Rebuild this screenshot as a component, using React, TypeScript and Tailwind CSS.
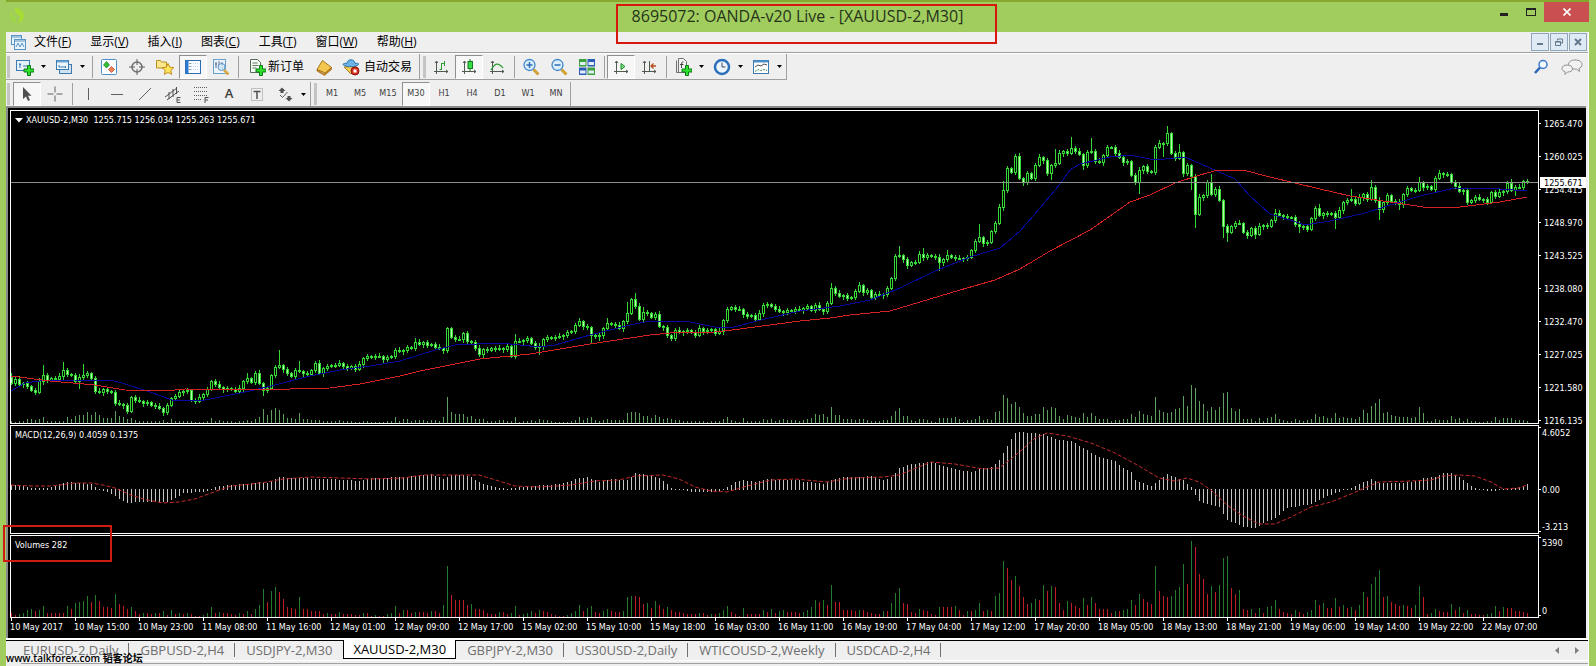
import type { ReactNode } from 'react';
import clsx from 'clsx';

type Point = [number, number];

const STEP = 4;
const FIRST_X = 11;
const VOLUME_BASE = 617;
const MACD_ZERO = 490;

const barX = (i: number) => FIRST_X + i * STEP;

// close of every bar, in chart window pixels
const CLOSES = [
  383, 379, 384, 383, 386, 390, 392, 381, 375, 380, 378, 379, 376, 370, 374, 375, 381, 377, 375, 373,
  378, 391, 392, 389, 391, 392, 403, 404, 405, 411, 397, 400, 401, 403, 402, 405, 406, 408, 412, 405,
  398, 396, 392, 391, 390, 400, 401, 397, 394, 389, 381, 384, 387, 389, 388, 389, 391, 388, 381, 378,
  382, 373, 383, 390, 388, 375, 367, 365, 369, 373, 376, 370, 371, 373, 374, 370, 363, 373, 368, 366,
  365, 365, 363, 366, 368, 366, 369, 364, 358, 356, 357, 356, 356, 359, 357, 356, 350, 351, 350, 347,
  348, 342, 344, 342, 345, 344, 347, 348, 350, 328, 337, 339, 339, 333, 341, 342, 348, 354, 349, 350,
  348, 349, 348, 349, 346, 356, 341, 341, 340, 338, 343, 347, 346, 339, 337, 338, 337, 336, 335, 332,
  331, 325, 321, 326, 327, 335, 336, 335, 328, 323, 324, 325, 328, 321, 313, 299, 306, 319, 312, 313,
  317, 314, 326, 327, 335, 338, 330, 332, 331, 330, 332, 335, 328, 331, 330, 329, 333, 331, 320, 309,
  307, 309, 309, 314, 316, 315, 319, 313, 305, 304, 306, 309, 311, 312, 310, 311, 309, 310, 308, 306,
  310, 305, 309, 311, 303, 288, 293, 296, 295, 298, 297, 291, 285, 292, 290, 297, 294, 295, 294, 288,
  278, 256, 255, 259, 265, 262, 262, 254, 257, 255, 256, 257, 262, 259, 255, 257, 258, 258, 258, 257,
  250, 241, 237, 243, 242, 231, 223, 207, 190, 168, 172, 156, 178, 182, 173, 178, 165, 157, 160, 173,
  165, 163, 153, 151, 153, 148, 151, 154, 165, 152, 151, 161, 162, 155, 147, 147, 153, 157, 162, 161,
  175, 182, 170, 166, 171, 172, 147, 143, 143, 133, 153, 158, 152, 173, 165, 176, 214, 197, 195, 182,
  194, 189, 200, 226, 232, 226, 223, 223, 232, 235, 228, 234, 226, 225, 226, 220, 213, 215, 216, 217,
  217, 224, 226, 226, 229, 218, 208, 215, 213, 214, 213, 217, 210, 202, 200, 199, 203, 197, 194, 199,
  187, 200, 209, 202, 195, 201, 202, 204, 194, 188, 190, 190, 182, 187, 186, 189, 178, 173, 174, 174,
  182, 186, 191, 190, 202, 200, 197, 199, 199, 202, 192, 196, 192, 191, 183, 190, 187, 187, 181, 181,
];

// bars whose wick reaches far out of the body
const HIGHS: Record<number, number> = {
  0: 373, 8: 365, 13: 362, 18: 364, 59: 373, 67: 350, 72: 361, 101: 338, 109: 327, 126: 334, 149: 318,
  154: 302, 156: 293, 158: 307, 188: 303, 205: 283, 222: 246, 228: 248, 234: 250, 242: 224, 248: 181,
  251: 154, 261: 149, 265: 137, 270: 138, 289: 126, 292: 144, 300: 174, 316: 209, 327: 204, 335: 189,
  340: 180, 352: 177, 374: 181, 375: 179,
};
const LOWS: Record<number, number> = {
  17: 389, 38: 416, 63: 396, 108: 354, 117: 357, 132: 355, 145: 344, 147: 341, 165: 341, 209: 301,
  224: 269, 232: 271, 253: 186, 260: 180, 268: 170, 282: 194, 288: 157, 295: 190, 296: 228, 303: 238,
  304: 242, 308: 234, 309: 239, 311: 239, 322: 233, 331: 229, 342: 220, 347: 210, 376: 196,
};

const VOLUMES = [
  4, 2, 3, 4, 7, 8, 6, 7, 11, 4, 4, 4, 4, 4, 11, 8, 14, 15, 16, 21,
  15, 22, 16, 10, 10, 9, 23, 13, 11, 8, 10, 6, 3, 4, 4, 3, 4, 4, 6, 2,
  7, 3, 4, 3, 4, 3, 1, 1, 2, 4, 10, 4, 5, 4, 4, 3, 2, 4, 3, 6,
  3, 8, 12, 28, 15, 26, 30, 25, 18, 10, 9, 8, 20, 8, 8, 6, 6, 6, 3, 4,
  3, 3, 5, 3, 3, 3, 2, 2, 4, 4, 1, 2, 1, 1, 3, 4, 11, 4, 7, 7,
  4, 5, 5, 5, 4, 6, 6, 4, 12, 51, 22, 17, 17, 17, 12, 13, 8, 8, 7, 4,
  3, 3, 5, 5, 3, 4, 11, 2, 3, 4, 6, 4, 7, 6, 5, 3, 2, 1, 1, 2,
  4, 6, 12, 6, 9, 11, 5, 4, 6, 8, 6, 5, 5, 6, 20, 21, 21, 20, 13, 14,
  9, 16, 12, 8, 10, 7, 5, 5, 4, 3, 3, 3, 4, 4, 2, 3, 3, 4, 7, 11,
  5, 3, 1, 9, 3, 3, 3, 3, 7, 5, 8, 4, 6, 7, 5, 5, 5, 4, 5, 7,
  10, 17, 15, 17, 12, 32, 15, 15, 7, 7, 7, 6, 7, 7, 5, 4, 3, 3, 6, 6,
  14, 24, 29, 14, 13, 5, 4, 8, 7, 6, 3, 2, 10, 10, 10, 10, 11, 7, 2, 6,
  6, 7, 14, 6, 7, 6, 21, 24, 56, 49, 37, 41, 31, 20, 13, 14, 18, 17, 32, 26,
  31, 30, 14, 7, 16, 14, 11, 9, 19, 12, 20, 14, 8, 8, 8, 4, 6, 6, 7, 8,
  17, 12, 23, 18, 15, 13, 51, 26, 21, 20, 21, 27, 30, 53, 33, 76, 70, 43, 38, 23,
  31, 25, 32, 59, 61, 29, 23, 27, 8, 7, 8, 4, 9, 4, 10, 11, 17, 8, 5, 4,
  3, 7, 5, 3, 5, 7, 17, 12, 14, 9, 9, 19, 10, 12, 9, 10, 7, 12, 25, 20,
  33, 40, 47, 20, 21, 15, 13, 11, 12, 11, 9, 12, 31, 20, 3, 4, 8, 6, 5, 5,
  13, 7, 10, 4, 7, 3, 3, 2, 2, 3, 4, 11, 6, 10, 9, 9, 6, 6, 5, 4,
];

// [bar, y] knots, straight lines in between
const MACD: Point[] = [
  [0, 485], [3, 486], [5, 488], [8, 488], [10, 487], [12, 484], [14, 482], [18, 483], [20, 484], [21, 487],
  [22, 489], [24, 492], [26, 496], [28, 501], [29, 503], [32, 502], [39, 502], [41, 498], [43, 493], [47, 492],
  [49, 491], [51, 487], [54, 485], [58, 484], [62, 482], [64, 483], [67, 477], [70, 478], [80, 479], [87, 481],
  [90, 478], [98, 477], [101, 476], [105, 474], [108, 479], [110, 475], [113, 475], [115, 477], [117, 482],
  [119, 485], [121, 487], [124, 489], [127, 487], [129, 486], [133, 485], [137, 484], [139, 482], [142, 478],
  [144, 477], [147, 482], [150, 479], [154, 480], [156, 473], [158, 474], [160, 475], [162, 478], [164, 484],
  [165, 488], [167, 489], [169, 491], [171, 492], [177, 492], [179, 487], [181, 482], [183, 480], [186, 482],
  [189, 479], [192, 480], [197, 480], [198, 482], [200, 482], [203, 484], [205, 480], [208, 477], [212, 477],
  [215, 476], [218, 480], [220, 477], [222, 468], [224, 465], [227, 463], [230, 462], [233, 466], [237, 470],
  [240, 472], [243, 468], [245, 467], [247, 460], [249, 446], [250, 439], [251, 433], [252, 432], [255, 433],
  [258, 434], [261, 439], [265, 441], [268, 448], [272, 457], [276, 461], [278, 468], [280, 472], [281, 480],
  [283, 483], [285, 486], [287, 480], [289, 474], [291, 477], [293, 480], [294, 484], [295, 487], [296, 495],
  [297, 501], [298, 503], [300, 505], [302, 507], [304, 520], [306, 523], [308, 527], [311, 528], [313, 523],
  [316, 518], [319, 508], [322, 506], [325, 504], [328, 498], [331, 493], [334, 489], [336, 486], [338, 482],
  [340, 479], [342, 483], [348, 483], [351, 481], [353, 478], [356, 477], [358, 473], [360, 473], [362, 477],
  [364, 483], [366, 488], [369, 491], [371, 491], [373, 489], [375, 488], [377, 487], [379, 484],
];

const SIGNAL: Point[] = [
  [0, 485], [5, 486], [10, 486], [16, 483], [20, 483], [23, 485], [26, 488], [30, 495], [34, 500], [38, 503],
  [42, 502], [46, 499], [50, 493], [55, 486], [60, 484], [64, 482], [68, 479], [75, 477], [90, 479], [98, 478],
  [103, 475], [117, 475], [122, 481], [126, 486], [132, 487], [140, 485], [146, 481], [152, 480], [156, 476],
  [163, 475], [167, 479], [171, 487], [175, 491], [179, 492], [184, 486], [190, 480], [196, 479], [204, 482],
  [210, 478], [218, 477], [222, 475], [230, 462], [236, 464], [243, 469], [247, 468], [250, 459], [253, 449],
  [256, 438], [259, 433], [264, 436], [270, 443], [276, 453], [282, 466], [287, 478], [291, 481], [294, 478],
  [297, 482], [300, 490], [304, 505], [308, 516], [312, 524], [316, 524], [320, 517], [325, 507], [330, 502],
  [335, 494], [339, 487], [342, 482], [350, 481], [355, 480], [358, 476], [362, 475], [366, 476], [370, 482],
  [373, 489], [377, 488], [379, 485],
];

// [x, y]
const SLOW_MA: Point[] = [
  [11, 376], [50, 381], [95, 385], [125, 390], [165, 391], [185, 389], [250, 390], [330, 388], [360, 384],
  [400, 376], [420, 371], [445, 366], [480, 359], [530, 354], [590, 344], [650, 335], [670, 333], [715, 332],
  [740, 329], [800, 321], [830, 318], [850, 315], [890, 311], [920, 302], [960, 290], [995, 280], [1020, 269],
  [1050, 251], [1090, 230], [1130, 202], [1150, 195], [1175, 183], [1200, 175], [1218, 170], [1243, 170],
  [1270, 177], [1320, 189], [1350, 196], [1390, 202], [1430, 208], [1460, 207], [1500, 202], [1527, 197],
];
const FAST_MA: Point[] = [
  [11, 391], [25, 383], [40, 381], [75, 380], [110, 380], [122, 383], [150, 392], [172, 400], [200, 401],
  [225, 396], [250, 391], [275, 385], [310, 376], [340, 370], [370, 366], [400, 361], [435, 350], [455, 345],
  [500, 343], [540, 347], [555, 345], [590, 335], [630, 325], [650, 321], [690, 322], [715, 327], [730, 328],
  [765, 319], [800, 311], [840, 306], [870, 300], [900, 288], [935, 271], [970, 257], [1000, 248], [1020, 231],
  [1040, 208], [1060, 184], [1070, 170], [1080, 164], [1110, 157], [1130, 155], [1155, 160], [1185, 157],
  [1210, 168], [1235, 179], [1250, 196], [1270, 214], [1290, 220], [1305, 225], [1330, 221], [1365, 213],
  [1400, 202], [1420, 196], [1455, 188], [1500, 189], [1527, 191],
];

const PRICES = [
  '1265.470', '1260.025', '1254.415', '1248.970', '1243.525',
  '1238.080', '1232.470', '1227.025', '1221.580', '1216.135',
];

const TIMES = [
  '10 May 2017', '10 May 15:00', '10 May 23:00', '11 May 08:00', '11 May 16:00', '12 May 01:00',
  '12 May 09:00', '12 May 17:00', '15 May 02:00', '15 May 10:00', '15 May 18:00', '16 May 03:00',
  '16 May 11:00', '16 May 19:00', '17 May 04:00', '17 May 12:00', '17 May 20:00', '18 May 05:00',
  '18 May 13:00', '18 May 21:00', '19 May 06:00', '19 May 14:00', '19 May 22:00', '22 May 07:00',
];

const MENUS = [
  ['文件', 'F'], ['显示', 'V'], ['插入', 'I'], ['图表', 'C'], ['工具', 'T'], ['窗口', 'W'], ['帮助', 'H'],
];

const TIMEFRAMES = ['M1', 'M5', 'M15', 'M30', 'H1', 'H4', 'D1', 'W1', 'MN'];

const TABS = [
  'EURUSD-2,Daily', 'GBPUSD-2,H4', 'USDJPY-2,M30', 'XAUUSD-2,M30',
  'GBPJPY-2,M30', 'US30USD-2,Daily', 'WTICOUSD-2,Weekly', 'USDCAD-2,H4',
];
const ACTIVE_TAB = 3;

function interpolate(knots: Point[], i: number) {
  const next = knots.findIndex(([bar]) => bar >= i);
  if (next <= 0) return knots[0][1];
  const [x0, y0] = knots[next - 1];
  const [x1, y1] = knots[next];
  return Math.round(y0 + ((y1 - y0) * (i - x0)) / (x1 - x0));
}

const toPoints = (points: Point[]) => points.map(([x, y]) => `${x},${y}`).join(' ');

/* ---------- chart ---------- */

function Candles() {
  return (
    <g shapeRendering="crispEdges" stroke="#35d835">
      {CLOSES.map((close, i) => {
        const open = i === 0 ? 377 : CLOSES[i - 1];
        const top = Math.min(open, close);
        const bottom = Math.max(open, close);
        const x = barX(i);
        const high = HIGHS[i] ?? top - 1 - ((i * 37) % 5 >> 1);
        const low = LOWS[i] ?? bottom + 2 + ((i * 53) % 5 >> 1);
        return (
          <g key={i}>
            <line x1={x + 0.5} x2={x + 0.5} y1={high} y2={low} />
            <rect
              x={x - 0.5}
              y={top + 0.5}
              width={2}
              height={Math.max(bottom - top, 1)}
              fill={close > open ? '#b8f8b0' : '#000'}
            />
          </g>
        );
      })}
    </g>
  );
}

function PricePlot() {
  return (
    <svg viewBox="11 111 1527 312" preserveAspectRatio="xMaxYMid slice" className="block h-full w-full">
      <g shapeRendering="crispEdges" fill="#5f9f5f">
        {VOLUMES.map((v, i) => {
          const h = Math.max(1, Math.round(v / 2));
          return <rect key={i} x={barX(i)} y={423 - h} width={1} height={h} />;
        })}
      </g>
      <Candles />
      <g fill="none" shapeRendering="crispEdges">
        <polyline points={toPoints(FAST_MA)} stroke="#0808a0" />
        <polyline points={toPoints(SLOW_MA)} stroke="#d42222" />
      </g>
      <rect x={11} y={182} width={1527} height={1} fill="#8c8f8c" />
    </svg>
  );
}

function MacdPlot() {
  return (
    <svg viewBox="11 426 1527 107" preserveAspectRatio="xMaxYMid slice" className="block h-full w-full">
      <g shapeRendering="crispEdges" fill="#c4c4c4">
        {CLOSES.map((_, i) => {
          const y = interpolate(MACD, i);
          const up = y < MACD_ZERO;
          return (
            <rect
              key={i}
              x={barX(i)}
              y={up ? y : MACD_ZERO - 1}
              width={1}
              height={up ? MACD_ZERO - y : y - MACD_ZERO + 1}
            />
          );
        })}
      </g>
      <polyline
        points={toPoints(SIGNAL.map(([i, y]) => [barX(i), y]))}
        fill="none"
        stroke="#c42a2a"
        strokeDasharray="4 2"
      />
    </svg>
  );
}

function VolumePlot() {
  return (
    <svg viewBox="11 536 1527 81" preserveAspectRatio="xMaxYMid slice" className="block h-full w-full">
      <g shapeRendering="crispEdges">
        {VOLUMES.map((v, i) => (
          <rect
            key={i}
            x={barX(i)}
            y={VOLUME_BASE - v}
            width={1}
            height={v}
            fill={i > 0 && v > VOLUMES[i - 1] ? '#237a2c' : '#c01c28'}
          />
        ))}
      </g>
    </svg>
  );
}

function Pane({ height, title, plot, scale }: { height: string; title: ReactNode; plot: ReactNode; scale: ReactNode }) {
  return (
    <section className={clsx('flex', height)}>
      <div className="relative min-w-0 flex-1 border border-white">
        {plot}
        <div className="absolute top-px left-1 flex items-center text-[9px] leading-4 whitespace-pre">{title}</div>
      </div>
      <div className="w-[47px] shrink-0">{scale}</div>
    </section>
  );
}

function PriceScale() {
  return (
    <svg viewBox="1539 110 47 314" className="block h-full w-full overflow-visible text-[9px]">
      {PRICES.map((price, i) => (
        <g key={price} fill="#fff">
          <rect x={1539} y={123 + i * 33} width={2} height={1} />
          <text x={1544} y={127 + i * 33}>{price}</text>
        </g>
      ))}
      <rect x={1540} y={177} width={46} height={11} fill="#fff" />
      <text x={1544} y={186} fill="#000">1255.671</text>
    </svg>
  );
}

function Chart() {
  return (
    <main className="border-t-2 border-l-2 border-[#8a8a8a] bg-black pt-[2px] pb-1 pl-[2px] font-['DejaVu_Sans_Condensed','Noto_Sans',sans-serif] text-white">
      <div className="flex flex-col gap-px">
        <Pane
          height="h-[314px]"
          title={
            <>
              <svg width="8" height="5" viewBox="0 0 8 5" fill="#fff"><path d="M0 0h8L4 4.500z" /></svg>
              <span className="pl-[3px]">XAUUSD-2,M30  1255.715 1256.034 1255.263 1255.671</span>
            </>
          }
          plot={<PricePlot />}
          scale={<PriceScale />}
        />
        <Pane
          height="h-[109px]"
          title="MACD(12,26,9) 0.4059 0.1375"
          plot={<MacdPlot />}
          scale={
            <svg viewBox="1539 425 47 109" className="block h-full w-full text-[9px]" fill="#fff">
              <rect x={1539} y={427} width={2} height={1} />
              <rect x={1539} y={489} width={2} height={1} />
              <rect x={1539} y={531} width={2} height={1} />
              <text x={1542} y={436}>4.6052</text>
              <text x={1542} y={493}>0.00</text>
              <text x={1542} y={530}>-3.213</text>
            </svg>
          }
        />
        <Pane
          height="h-[83px]"
          title="Volumes 282"
          plot={<VolumePlot />}
          scale={
            <svg viewBox="1539 535 47 83" className="block h-full w-full text-[9px]" fill="#fff">
              <rect x={1539} y={537} width={2} height={1} />
              <rect x={1539} y={615} width={2} height={1} />
              <text x={1542} y={546}>5390</text>
              <text x={1542} y={614}>0</text>
            </svg>
          }
        />
      </div>
      <ol className="flex overflow-hidden">
        {TIMES.map((time) => (
          <li
            key={time}
            className="w-16 shrink-0 text-[9px] leading-[13px] whitespace-nowrap before:ml-px before:block before:h-[3px] before:w-px before:bg-white"
          >
            {time}
          </li>
        ))}
      </ol>
    </main>
  );
}

/* ---------- icons ---------- */

function Icon({ children, size = 18 }: { children: ReactNode; size?: number }) {
  return (
    <svg width={size} height={size} viewBox="0 0 18 18" fill="none" aria-hidden="true">
      {children}
    </svg>
  );
}

const plus = <path d="M11.500 7.500h3v3.500h3.500v3h-3.500v3.500h-3v-3.500H8v-3h3.500z" fill="#2fe02f" stroke="#0a7a14" />;

const axes = (
  <path d="M4.500 3v13M2 13.500h14M3 5l1.500-2L6 5M14 12l2 1.500-2 1.500" stroke="#505a50" />
);

const NewChartIcon = (
  <Icon>
    <rect x=".5" y="2.500" width="13" height="10" fill="#e4f0fb" stroke="#3c7ab0" />
    <path d="M4 5v5M3 6.500h2M7 8h4" stroke="#3c7ab0" />
    {plus}
  </Icon>
);
const ProfilesIcon = (
  <Icon>
    <rect x="4.500" y="6.500" width="12" height="9" fill="#cfe2f4" stroke="#3c7ab0" />
    <rect x="1.500" y="2.500" width="12" height="9" fill="#eef6fd" stroke="#3c7ab0" />
    <path d="M2 3.500h11" stroke="#6aa4d4" strokeWidth="2" />
    <path d="M4 7v2h7M10 8l1 1-1 1" stroke="#3c7ab0" />
  </Icon>
);
const MarketWatchIcon = (
  <Icon>
    <rect x="1.500" y="1.500" width="15" height="15" rx="1" fill="#fff" stroke="#4a90c8" />
    <path d="M6.500 3.500L9.500 7 6.500 10 3.500 7z" fill="#34c034" stroke="#0f7a1c" strokeWidth=".7" />
    <path d="M11.500 14.500l3-3-3-3-3 3z" fill="#f08058" stroke="#b03818" strokeWidth=".7" />
  </Icon>
);
const DataWindowIcon = (
  <Icon>
    <circle cx="9" cy="9" r="5" stroke="#707070" strokeWidth="1.500" />
    <path d="M9 1v6M9 11v6M1 9h6M11 9h6" stroke="#606060" />
  </Icon>
);
const NavigatorIcon = (
  <Icon>
    <path d="M.5 2.500h4l1 1.500h5v6H.5z" fill="#fbe68c" stroke="#b89020" />
    <path d="M12 5.500l1.800 3.700 4 .5-3 2.700.8 4-3.600-2-3.600 2 .8-4-3-2.700 4-.5z" fill="#ffe45c" stroke="#c09018" />
  </Icon>
);
const TerminalIcon = (
  <Icon>
    <rect x="1.500" y="2.500" width="15" height="13" fill="#f8fbff" stroke="#2c6cb0" />
    <path d="M3 3v12" stroke="#2c78d0" strokeWidth="3" />
    <path d="M7 5.500h8M7 8.500h8M7 11.500h8" stroke="#c4d6ea" strokeDasharray="1 1" />
    <path d="M5.500 5.500h1M5.500 8.500h1M5.500 11.500h1" stroke="#404040" />
  </Icon>
);
const TesterIcon = (
  <Icon>
    <rect x="1.500" y="1.500" width="12" height="14" fill="#eef4fb" stroke="#6aa0cc" />
    <path d="M4 4v6M7 3v5M10 4v7M3 6h2M9 6h2" stroke="#507090" />
    <circle cx="9.500" cy="9" r="3.500" fill="#cfe6fa" fillOpacity=".8" stroke="#5a96c8" />
    <path d="M12 12l4.500 4.500" stroke="#d8a840" strokeWidth="2.500" />
  </Icon>
);
const NewOrderIcon = (
  <Icon>
    <path d="M2.500 1.500h7l3 3v10h-10z" fill="#f6faf6" stroke="#5a6a5a" />
    <path d="M4.500 5h5M4.500 7.500h6M4.500 10h4" stroke="#607860" />
    {plus}
  </Icon>
);
const MetaEditorIcon = (
  <Icon>
    <path d="M2 11.500L7.500 2.500l9 7-6 5.500z" fill="#f4c850" stroke="#a87414" />
    <path d="M2 11.500l7 4.500 7.500-6.500v2L9.500 17.500 2 13z" fill="#c88c20" stroke="#946010" strokeWidth=".6" />
  </Icon>
);
const AutoTradingIcon = (
  <Icon>
    <path d="M2 9l7 7 5-4V8z" fill="#f6cc54" stroke="#a87c18" />
    <path d="M5 5.500c0-5 8-5 8 0 3-.5 4 0 3.500 1C14 9.500 4 9.500 1 6.500c0-1 2-1.500 4-1z" fill="#6cb4e8" stroke="#2c78b0" />
    <circle cx="13" cy="13" r="4" fill="#d83020" stroke="#901408" />
    <rect x="11.500" y="11.500" width="3" height="3" fill="#fff" />
  </Icon>
);
const BarChartIcon = (
  <Icon>
    {axes}
    <path d="M9.500 5v7M7.500 11.500h2M9.500 5.500h3M12.500 3v5" stroke="#2c9c34" />
  </Icon>
);
const CandleChartIcon = (
  <Icon>
    {axes}
    <path d="M10 1v12" stroke="#147a20" />
    <rect x="8" y="3.500" width="4.500" height="7" fill="#38dc44" stroke="#147a20" />
  </Icon>
);
const LineChartIcon = (
  <Icon>
    {axes}
    <path d="M3 12c4-7 7-8 12-2" stroke="#2c9c34" strokeWidth="1.200" />
  </Icon>
);
const magnifier = (
  <>
    <path d="M11.500 11.500l5 5" stroke="#d0a030" strokeWidth="3" />
    <circle cx="7.500" cy="7" r="5.500" fill="#dceefb" stroke="#4088cc" strokeWidth="1.300" />
  </>
);
const ZoomInIcon = (
  <Icon>
    {magnifier}
    <path d="M4.500 7h6M7.500 4v6" stroke="#2c6cb8" strokeWidth="1.500" />
  </Icon>
);
const ZoomOutIcon = (
  <Icon>
    {magnifier}
    <path d="M4.500 7h6" stroke="#2c6cb8" strokeWidth="1.500" />
  </Icon>
);
const TileIcon = (
  <Icon>
    <path d="M1 1h7.500v7.500H1zM9.500 9.500H17V17H9.500z" fill="#3ca03c" />
    <path d="M9.500 1H17v7.500H9.500zM1 9.500h7.500V17H1z" fill="#2c5cb8" />
    <path d="M2 4h5.500v3H2zM10.500 4H16v3h-5.500zM2 12.500h5.500v3H2zM10.500 12.500H16v3h-5.500z" fill="#e4eefa" />
  </Icon>
);
const AutoScrollIcon = (
  <Icon>
    {axes}
    <path d="M9 5.500v6l4-3z" fill="#7ce07c" stroke="#1c8c2c" />
  </Icon>
);
const ShiftIcon = (
  <Icon>
    {axes}
    <path d="M9.500 3v10" stroke="#505a50" />
    <path d="M11 8h5M13.500 5.500L11 8l2.500 2.500" stroke="#b84a1c" strokeWidth="1.300" />
  </Icon>
);
const IndicatorsIcon = (
  <Icon>
    <path d="M4.500.5h5l3 3v11h-8z" fill="#f4f4f4" stroke="#707070" />
    <path d="M2.500 2.500v12h6" stroke="#707070" />
    <path d="M9.500 4c-2-1-2 2-2 6M6 6.500h3.500" stroke="#404040" />
    {plus}
  </Icon>
);
const PeriodsIcon = (
  <Icon>
    <circle cx="9" cy="9" r="7" fill="#eef6fd" stroke="#2c70bc" strokeWidth="2.500" />
    <path d="M9 4.500V9h3.500" stroke="#404860" />
  </Icon>
);
const TemplatesIcon = (
  <Icon>
    <rect x="1.500" y="2.500" width="15" height="13" fill="#fff" stroke="#3c7ab0" />
    <path d="M2 3.500h14" stroke="#4c90cc" strokeWidth="2" />
    <path d="M3 9l3-2 3 1 3-2 3 1" stroke="#505050" />
    <path d="M3 13.500l3-2 3 1 3-1 3 1" stroke="#3c9050" strokeDasharray="2 1" />
  </Icon>
);

const CursorIcon = (
  <Icon>
    <path d="M5 2v12l3-2.500 2 4.500 2-1-2-4.200h3.500z" fill="#505050" />
  </Icon>
);
const CrosshairIcon = (
  <Icon>
    <path d="M9 1.500v6M9 10.500v6M1.500 9h6M10.500 9h6" stroke="#606060" />
  </Icon>
);
const ChannelIcon = (
  <Icon>
    <path d="M1 12l12-9M3 15l12-9M5 7v7M9 4v8M12.500 2v7" stroke="#505050" />
    <path d="M16.500 12.500H13v5h3.500M13 15h3" stroke="#505050" />
  </Icon>
);
const FiboIcon = (
  <Icon>
    <path d="M2 2.500h14M2 6.500h14M2 10.500h14M2 14.500h8" stroke="#606060" strokeDasharray="1 1" />
    <path d="M16.500 12.500H13V18M13 15h3" stroke="#505050" />
  </Icon>
);
const TextLabelIcon = (
  <Icon>
    <rect x="3.500" y="3.500" width="11" height="12" stroke="#909090" strokeDasharray="1 1" />
    <path d="M5.500 6.500h7M9 6.500v7.500" stroke="#505050" strokeWidth="1.500" />
  </Icon>
);
const ArrowsIcon = (
  <Icon>
    <path d="M6 2.500L9.500 6H7.500v2h-3V6h-2zM13 16.500l3.500-3.500h-2v-2h-3v2h-2z" fill="#505050" />
    <path d="M4 10l2.500 2.500L11.500 7" stroke="#606060" />
  </Icon>
);

/* ---------- toolbars ---------- */

function ToolButton({ label, pressed, children }: { label: string; pressed?: boolean; children: ReactNode }) {
  return (
    <button
      type="button"
      aria-label={label}
      aria-pressed={pressed}
      className={clsx(
        'flex h-6 w-7 shrink-0 items-center justify-center border text-[9px] text-[#404040]',
        pressed ? 'border-t-[#909090] border-r-white border-b-white border-l-[#909090] bg-[#f7f7f7]' : 'border-transparent',
      )}
    >
      {children}
    </button>
  );
}

function DropArrow({ label }: { label: string }) {
  return (
    <button type="button" aria-label={label} className="flex h-6 w-[11px] shrink-0 items-center justify-start pl-[2px]">
      <svg width="5" height="3" viewBox="0 0 5 3"><path d="M0 0h5L2.500 3z" fill="#000" /></svg>
    </button>
  );
}

const Grip = () => (
  <svg width="5" height="22" viewBox="0 0 5 22" className="shrink-0">
    <path d="M1 1h3M1 3h3M1 5h3M1 7h3M1 9h3M1 11h3M1 13h3M1 15h3M1 17h3M1 19h3M1 21h3" stroke="#9a9a9a" />
  </svg>
);

const Separator = () => (
  <div className="flex w-[6px] shrink-0 justify-center"><div className="h-[22px] w-px bg-[#a0a0a0]" /></div>
);

function StandardToolbar() {
  return (
    <div className="flex h-[27px] items-center justify-between border-t border-white pr-[5px]">
      <div className="flex h-full items-center border-r border-b border-[#a0a0a0]">
        <Grip />
        <ToolButton label="新图表">{NewChartIcon}</ToolButton>
        <DropArrow label="新图表列表" />
        <ToolButton label="配置文件">{ProfilesIcon}</ToolButton>
        <DropArrow label="配置文件列表" />
        <Separator />
        <ToolButton label="市场报价">{MarketWatchIcon}</ToolButton>
        <ToolButton label="数据窗口">{DataWindowIcon}</ToolButton>
        <ToolButton label="导航">{NavigatorIcon}</ToolButton>
        <ToolButton label="终端" pressed>{TerminalIcon}</ToolButton>
        <ToolButton label="策略测试">{TesterIcon}</ToolButton>
        <Separator />
        <button type="button" className="flex w-[69px] items-center gap-[2px] pl-[7px] text-[12px] leading-4 whitespace-nowrap">
          {NewOrderIcon}新订单
        </button>
        <ToolButton label="MetaEditor">{MetaEditorIcon}</ToolButton>
        <button type="button" className="flex w-[81px] items-center gap-[4px] pl-1 text-[12px] leading-4 whitespace-nowrap">
          {AutoTradingIcon}自动交易
        </button>
      </div>
      <div className="flex h-full flex-1 items-center">
        <div className="flex h-full items-center border-r border-b border-[#a0a0a0] pl-[2px]">
          <Grip />
          <ToolButton label="柱状图">{BarChartIcon}</ToolButton>
          <ToolButton label="阴阳烛" pressed>{CandleChartIcon}</ToolButton>
          <ToolButton label="折线图">{LineChartIcon}</ToolButton>
          <Separator />
          <ToolButton label="放大">{ZoomInIcon}</ToolButton>
          <ToolButton label="缩小">{ZoomOutIcon}</ToolButton>
          <ToolButton label="平铺窗口">{TileIcon}</ToolButton>
          <Separator />
          <ToolButton label="自动滚动" pressed>{AutoScrollIcon}</ToolButton>
          <ToolButton label="图表平移">{ShiftIcon}</ToolButton>
          <Separator />
          <ToolButton label="指标列表">{IndicatorsIcon}</ToolButton>
          <DropArrow label="指标菜单" />
          <ToolButton label="周期">{PeriodsIcon}</ToolButton>
          <DropArrow label="周期菜单" />
          <ToolButton label="模板">{TemplatesIcon}</ToolButton>
          <DropArrow label="模板菜单" />
        </div>
      </div>
      <div className="flex items-center gap-3">
        <button type="button" aria-label="搜索">
          <svg width="16" height="16" viewBox="0 0 16 16" fill="none">
            <circle cx="10" cy="5.500" r="4" fill="#f4faff" stroke="#3c78c8" strokeWidth="1.500" />
            <path d="M7 8.500L2 14" stroke="#2c64b8" strokeWidth="2.500" />
          </svg>
        </button>
        <button type="button" aria-label="聊天">
          <svg width="22" height="16" viewBox="0 0 22 16" fill="#f2f2f2" stroke="#909090">
            <path d="M14 1c4.500 0 7 1.800 7 4.500 0 2-1.500 3.500-3 4l.5 3-3-2.500C10 10.500 7.500 8 7.500 5.500S10 1 14 1z" />
            <path d="M6 6c3.500 0 5.500 1.500 5.500 3.800S9.500 13 6.500 13L4 15.500v-3C2 12 1 11 1 9.800 1 7.500 3 6 6 6z" />
          </svg>
        </button>
      </div>
    </div>
  );
}

function DrawingToolbar() {
  return (
    <div className="flex h-[26px] items-center pt-[2px]">
      <div className="flex h-full items-center border-r border-[#a0a0a0]">
        <Grip />
        <div className="w-[2px]" />
        <ToolButton label="光标" pressed>{CursorIcon}</ToolButton>
        <ToolButton label="十字准线">{CrosshairIcon}</ToolButton>
        <Separator />
        <ToolButton label="垂直线"><Icon><path d="M8.500 3v12" stroke="#606060" /></Icon></ToolButton>
        <ToolButton label="水平线"><Icon><path d="M3 9.500h12" stroke="#606060" /></Icon></ToolButton>
        <ToolButton label="趋势线"><Icon><path d="M3 15L15 3" stroke="#606060" /></Icon></ToolButton>
        <ToolButton label="等距通道">{ChannelIcon}</ToolButton>
        <ToolButton label="斐波那契">{FiboIcon}</ToolButton>
        <ToolButton label="文字"><span className="font-['Open_Sans',sans-serif] text-[13px] font-semibold">A</span></ToolButton>
        <ToolButton label="文字标签">{TextLabelIcon}</ToolButton>
        <ToolButton label="箭头">{ArrowsIcon}</ToolButton>
        <DropArrow label="箭头菜单" />
      </div>
      <div className="flex h-full items-center border-r border-[#a0a0a0] pl-[2px] font-['DejaVu_Sans_Condensed','Noto_Sans',sans-serif]">
        <Grip />
        {TIMEFRAMES.map((tf) => (
          <ToolButton key={tf} label={tf} pressed={tf === 'M30'}>{tf}</ToolButton>
        ))}
      </div>
    </div>
  );
}

/* ---------- window ---------- */

function TitleBar() {
  return (
    <header className="relative flex h-8 items-start justify-center border-t-2 border-[#86a82c]">
      <svg width="18" height="18" viewBox="0 0 18 18" className="absolute top-[5px] left-[2px]">
        <path d="M7 1c5 0 9 3 9 8 0 4-3 7-6 7l2-6-5-5z" fill="#a6dc34" />
        <path d="M2 5l6 5v6C4 15 2 12 2 9z" fill="#9fd548" />
      </svg>
      <h1 className="text-[16px] leading-[29px] text-[#26331a]">8695072: OANDA-v20 Live - [XAUUSD-2,M30]</h1>
      <div className="absolute top-0 right-0 flex h-5">
        <button type="button" aria-label="最小化" className="flex w-[27px] items-center justify-center pt-[5px]">
          <span className="h-[3px] w-2 bg-[#222]" />
        </button>
        <button type="button" aria-label="最大化" className="flex w-[27px] items-center justify-center">
          <span className="h-2 w-[10px] border border-t-2 border-[#222]" />
        </button>
        <button type="button" aria-label="关闭" className="flex w-[45px] items-center justify-center bg-[#c94f50]">
          <svg width="8" height="8" viewBox="0 0 8 8"><path d="M.5.5l7 7M7.500.5l-7 7" stroke="#fff" strokeWidth="1.600" /></svg>
        </button>
      </div>
    </header>
  );
}

const CHILD_BUTTON = 'flex h-[18px] w-[18px] items-center justify-center border border-[#8fa6bc] bg-[#dfeaf5]';

function MenuBar() {
  return (
    <nav className="flex h-[21px] items-center justify-between border-b border-[#a0a0a0] pr-px pl-[5px]">
      <div className="flex items-center gap-[19px]">
        <svg width="15" height="15" viewBox="0 0 15 15" fill="#eaf4fc" stroke="#5a94c4" className="-mr-[11px]">
          <rect x=".5" y=".5" width="10" height="9" />
          <rect x="3.500" y="4.500" width="11" height="10" />
          <path d="M1 2h9M4 6h10M5 12l2-4 2 4 2-4 2 4" fill="none" />
        </svg>
        {MENUS.map(([name, key]) => (
          <button key={key} type="button" className="text-[12px] leading-[18px] whitespace-nowrap">
            {name}(<u>{key}</u>)
          </button>
        ))}
      </div>
      <div className="flex gap-px">
        <button type="button" aria-label="最小化图表" className={CHILD_BUTTON}>
          <span className="mt-1 h-[2px] w-[6px] bg-[#64788c]" />
        </button>
        <button type="button" aria-label="还原图表" className={CHILD_BUTTON}>
          <svg width="8" height="8" viewBox="0 0 8 8" fill="none" stroke="#64788c"><path d="M2.500 2.500V1h5v4H6M.5 3.500h5v4h-5zM.5 4h5" /></svg>
        </button>
        <button type="button" aria-label="关闭图表" className={CHILD_BUTTON}>
          <svg width="8" height="8" viewBox="0 0 8 8"><path d="M1 1l6 6M7 1L1 7" stroke="#64788c" strokeWidth="2" /></svg>
        </button>
      </div>
    </nav>
  );
}

function ChartTabs() {
  return (
    <div className="flex h-[22px] items-start border-t-2 border-white">
      <div className="h-px w-[6px] bg-black" />
      {TABS.map((tab, i) => (
        <button
          key={tab}
          type="button"
          className={clsx(
            'relative h-[19px] shrink-0 text-[13px] leading-[18px] whitespace-nowrap',
            i === ACTIVE_TAB
              ? 'border-x border-b border-black bg-white px-[9px] text-black'
              : 'border-t border-t-black px-[11px] text-[#707070]',
          )}
        >
          {tab}
          {i !== ACTIVE_TAB && i !== ACTIVE_TAB - 1 && (
            <span className="absolute top-[2px] right-0 h-[14px] w-px bg-[#707070]" />
          )}
        </button>
      ))}
      <div className="flex h-[19px] flex-1 items-center justify-end gap-3 border-t border-black pr-[9px]">
        <button type="button" aria-label="向左滚动">
          <svg width="4" height="7" viewBox="0 0 4 7"><path d="M4 0v7L0 3.500z" fill="#808080" /></svg>
        </button>
        <button type="button" aria-label="向右滚动" className="pl-1">
          <svg width="4" height="7" viewBox="0 0 4 7"><path d="M0 0v7l4-3.500z" fill="#808080" /></svg>
        </button>
      </div>
    </div>
  );
}

export default function App() {
  return (
    <div className="relative overflow-hidden bg-[#a1cd5f] pr-[7px] pl-[6px] font-['Open_Sans','Noto_Sans_CJK_SC',sans-serif] text-black">
      <TitleBar />
      <div className="border-r border-white bg-[#efefef]">
        <MenuBar />
        <StandardToolbar />
        <DrawingToolbar />
        <div className="pr-[2px]">
          <Chart />
        </div>
        <ChartTabs />
        <div className="h-[6px] border-t border-white pl-[15px]">
          <div className="mt-[2px] h-[2px] border-t border-[#a0a0a0]" />
        </div>
      </div>

      <div className="absolute top-1 left-1/2 -ml-[182px] h-[40px] w-[381px] border-2 border-[#d8180c]" />
      <div className="absolute top-[525px] left-[3px] h-[37px] w-[109px] border-2 border-[#d01c10]" />
      <p className="absolute bottom-0 left-[6px] text-[10px] leading-4 font-semibold whitespace-nowrap">
        www.talkforex.com 韬客论坛
      </p>
    </div>
  );
}
